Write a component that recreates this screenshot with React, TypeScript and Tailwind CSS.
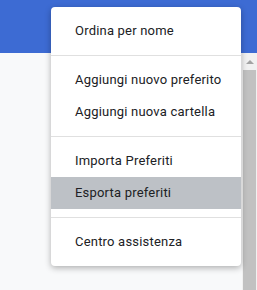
import React from 'react';

const sections: string[][] = [
  ['Ordina per nome'],
  ['Aggiungi nuovo preferito', 'Aggiungi nuova cartella'],
  ['Importa Preferiti', 'Esporta preferiti'],
  ['Centro assistenza'],
];

const ACTIVE = 'Esporta preferiti';

export default function App() {
  return (
    <div className="relative w-[257px] h-[290px] overflow-hidden bg-[#f8f9fa] font-['Roboto','Liberation_Sans',sans-serif]">
      {/* barra superiore */}
      <div className="h-[53px] bg-[#3d6bd3]" />

      {/* scrollbar */}
      <div className="absolute right-0 top-[53px] bottom-0 w-[15px] bg-[#f1f1f1] flex flex-col">
        <div className="h-[17px] flex items-center justify-center">
          <div className="w-0 h-0 border-x-[4px] border-x-transparent border-b-[4px] border-b-[#a3a3a3]" />
        </div>
        <div className="flex-1 mx-[1px] bg-[#c1c1c1]" />
      </div>

      {/* menu */}
      <div className="absolute left-[51px] top-[7px] w-[190px] rounded-[4px] bg-white shadow-[0_2px_6px_rgba(0,0,0,0.3)]">
        {sections.map((items, i) => (
          <div key={i} className={i > 0 ? 'py-2 border-t border-[#e0e0e0]' : 'py-2'}>
            {items.map((label) => (
              <div
                key={label}
                className={
                  label === ACTIVE
                    ? 'h-8 flex items-center pl-6 text-[13px] tracking-[0.2px] text-[#202124] bg-[#bdc1c6]'
                    : 'h-8 flex items-center pl-6 text-[13px] tracking-[0.2px] text-[#202124]'
                }
              >
                {label}
              </div>
            ))}
          </div>
        ))}
      </div>
    </div>
  );
}
